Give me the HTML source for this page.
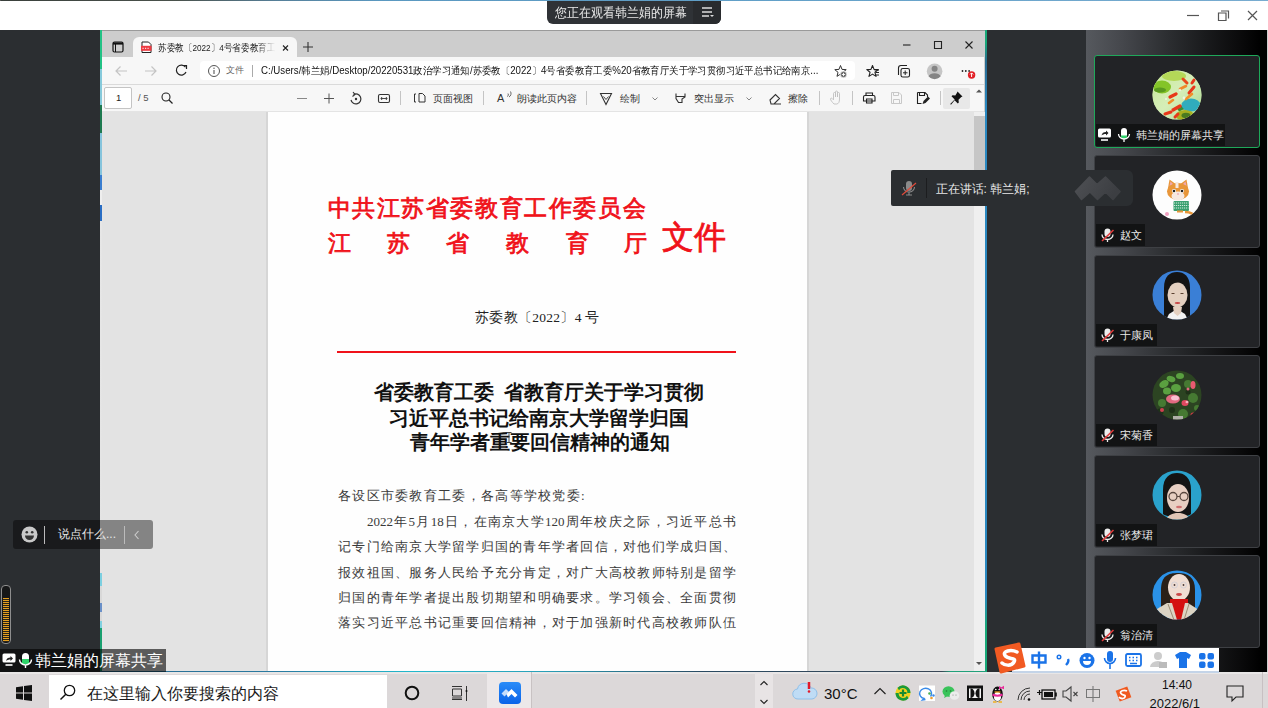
<!DOCTYPE html>
<html><head><meta charset="utf-8">
<style>
*{box-sizing:border-box;margin:0;padding:0}
html,body{width:1268px;height:708px;overflow:hidden;background:#2b2e31;font-family:"Liberation Sans",sans-serif;position:relative}
.a{position:absolute}
.t{position:absolute;white-space:nowrap;line-height:1}
svg{position:absolute;overflow:visible}
.jl{font-size:13px;line-height:16px;height:16px;color:#3a3a3a;font-family:"Liberation Serif",serif;text-align:justify;text-align-last:justify;white-space:nowrap}
.av0{background:radial-gradient(circle at 70% 68%,#2aa8b8 0 14%,transparent 15%),radial-gradient(circle at 62% 85%,#98a010 0 12%,transparent 13%),radial-gradient(circle at 25% 30%,#7ac020 0 16%,transparent 17%),radial-gradient(circle at 50% 45%,#e0602a 0 20%,transparent 40%),linear-gradient(135deg,#c8e890,#a8d880 50%,#c0e0a0)}
.av1{background:radial-gradient(ellipse at 50% 40%,#e89a50 0 18%,transparent 19%),radial-gradient(ellipse at 50% 70%,#4aa070 0 16%,transparent 17%),#fdfdfd}
.av2{background:radial-gradient(ellipse at 50% 52%,#e8d0c0 0 24%,transparent 25%),radial-gradient(ellipse at 50% 48%,#151515 0 40%,transparent 41%),radial-gradient(ellipse at 50% 100%,#f0f0f0 0 22%,transparent 23%),#3a7ad0}
.av3{background:radial-gradient(circle at 45% 55%,#e07088 0 14%,transparent 22%),radial-gradient(circle at 70% 30%,#d05070 0 8%,transparent 12%),radial-gradient(circle at 50% 50%,#4a8a3a,#2a4a20 70%)}
.av4{background:radial-gradient(ellipse at 50% 52%,#e8cfc0 0 22%,transparent 23%),radial-gradient(ellipse at 50% 45%,#1a1a1a 0 38%,transparent 39%),radial-gradient(ellipse at 50% 100%,#404040 0 30%,transparent 31%),#2aa0c8}
.av5{background:radial-gradient(ellipse at 50% 95%,#d02020 0 18%,transparent 19%),radial-gradient(ellipse at 50% 100%,#d8d0c0 0 34%,transparent 35%),radial-gradient(ellipse at 50% 45%,#e8d0c0 0 18%,transparent 19%),radial-gradient(ellipse at 50% 45%,#3a2a20 0 34%,transparent 35%),#2a90e0}
</style></head><body>

<!-- top strip + white bar -->
<div class="a" style="left:0;top:0;width:1268px;height:2px;background:linear-gradient(90deg,#3a403c 0%,#4a524c 14%,#56809a 22%,#5a98c0 30%,#62a0c8 60%,#78acd0 100%)"></div><div class="a" style="left:0;top:0;width:1px;height:30px;background:#555"></div><div class="a" style="left:1267px;top:1px;width:1px;height:29px;background:#d8d8d8"></div>
<div class="a" style="left:0;top:1px;width:1268px;height:29px;background:#fff"></div>
<!-- pill -->
<div class="a" style="left:547px;top:1px;width:174px;height:23px;background:#2f3236;border-radius:0 0 6px 6px"></div>
<div class="a" style="left:693px;top:1px;width:28px;height:23px;background:#292b2e;border-radius:0 0 6px 0"></div>
<div class="t" style="left:555px;top:5.5px;font-size:13px;color:#eaeaea;transform:scaleX(0.92);transform-origin:0 0">您正在观看韩兰娟的屏幕</div>
<svg style="left:701px;top:6px" width="14" height="12"><path d="M1 2h10M1 6h10M1 10h7" stroke="#ddd" stroke-width="1.3"/><path d="M9 9l2 2 2-2z" fill="#ddd"/></svg>
<!-- window controls -->
<svg style="left:1185px;top:8px" width="80" height="16"><path d="M2 7.5h12" stroke="#555" stroke-width="1.2"/><path d="M33.5 5h7.5v7.5h-7.5z" fill="none" stroke="#555" stroke-width="1.2"/><path d="M36 3h7.5v7.5" fill="none" stroke="#555" stroke-width="1.2"/><path d="M63 3l9 9M72 3l-9 9" stroke="#555" stroke-width="1.2"/></svg>


<!-- ============ BROWSER ============ -->
<div class="a" style="left:100px;top:30px;width:886px;height:642px;background:#cdcdcd"></div>
<div class="a" style="left:100px;top:30px;width:886px;height:1px;background:#9a9a9a"></div>
<!-- left colorful strip -->
<div class="a" style="left:100px;top:30px;width:2px;height:642px;background:linear-gradient(180deg,#22c285 0.00%,#22c285 6.07%,#86cadb 6.07%,#86cadb 11.68%,#1e7a50 11.68%,#1e7a50 16.04%,#86c4dc 16.04%,#86c4dc 22.59%,#3a7ed0 22.59%,#3a7ed0 24.92%,#eeeeee 24.92%,#eeeeee 27.26%,#2a6ec4 27.26%,#2a6ec4 29.75%,#e6e6e6 29.75%,#e3e3e3 84.58%,#7ccfe0 84.58%,#7ccfe0 86.60%,#d8d8d8 86.60%,#d8d8d8 89.25%,#6a90c8 89.25%,#6a90c8 90.65%,#d8d8d8 90.65%,#d8d8d8 92.06%,#80d0e0 92.06%,#80d0e0 93.15%,#1aa070 93.15%,#1aa070 100.00%)"></div>
<!-- right border -->
<div class="a" style="left:985px;top:30px;width:1.5px;height:642px;background:linear-gradient(180deg,#18a878 0%,#18a878 2%,#2a6a90 5%,#2a88c0 12%,#2a88c0 88%,#18a878 93%)"></div>
<!-- window buttons -->
<svg style="left:898px;top:38px" width="80" height="16"><path d="M5 7h7.5" stroke="#222" stroke-width="1.1"/><path d="M36.5 3.5h7v7h-7z" fill="none" stroke="#222" stroke-width="1.1"/><path d="M67.5 3.5l7 7M74.5 3.5l-7 7" stroke="#222" stroke-width="1.1"/></svg>
<!-- tab -->
<svg style="left:112px;top:41px" width="14" height="12"><rect x="1" y="1" width="10" height="10" rx="1.5" fill="none" stroke="#111" stroke-width="1.2"/><path d="M1 2.5h10" stroke="#111" stroke-width="2.2"/><path d="M3.5 3v8" stroke="#111" stroke-width="1"/></svg>
<div class="a" style="left:133px;top:37px;width:164px;height:21px;background:#f7f7f7;border-radius:6px 6px 0 0"></div>
<svg style="left:140px;top:41px" width="14" height="14"><path d="M2 1h6.5l2.5 2.5V11.5H2z" fill="#fff" stroke="#222" stroke-width="1"/><rect x="1" y="4.8" width="10.5" height="5" fill="#ee3b42"/><path d="M2.5 7.3h7.5" stroke="#fff" stroke-width="1" stroke-dasharray="1.2 1.3"/></svg>
<div class="t" style="left:158px;top:42.5px;font-size:9.5px;color:#222;width:120px;height:12px;overflow:hidden;-webkit-mask-image:linear-gradient(90deg,#000 82%,transparent 98%)"><span style="display:inline-block;transform:scaleX(0.86);transform-origin:0 0">苏委教〔2022〕4号省委教育工委</span></div>
<svg style="left:280px;top:43px" width="10" height="10"><path d="M3 2.5l5 5M8 2.5l-5 5" stroke="#222" stroke-width="1.1"/></svg>
<svg style="left:302px;top:41px" width="12" height="12"><path d="M6 1v10M1 6h10" stroke="#333" stroke-width="1.1"/></svg>
<!-- toolbar -->
<div class="a" style="left:102px;top:57px;width:882px;height:27px;background:#f7f7f7"></div>
<div class="a" style="left:200px;top:61px;width:655px;height:19px;background:#fff;border-radius:4px"></div>
<svg style="left:114px;top:64px" width="90" height="14"><path d="M13 7H2M6.5 2.5L2 7l4.5 4.5" fill="none" stroke="#c4c4c4" stroke-width="1.2"/><path d="M31 7h11M37.5 2.5L42 7l-4.5 4.5" fill="none" stroke="#c4c4c4" stroke-width="1.2"/><path d="M71.5 3.2A5 5 0 1 0 72 8" fill="none" stroke="#222" stroke-width="1.2"/><path d="M69 1.5h3.5v3.5" fill="none" stroke="#222" stroke-width="1.2"/></svg>
<svg style="left:207px;top:64px" width="14" height="14"><circle cx="7" cy="7" r="5.5" fill="none" stroke="#555" stroke-width="1"/><path d="M7 6v4" stroke="#555" stroke-width="1.1"/><circle cx="7" cy="4.2" r="0.7" fill="#555"/></svg>
<div class="t" style="left:226px;top:66px;font-size:9.3px;color:#666">文件</div>
<div class="a" style="left:252px;top:65px;width:1px;height:12px;background:#aaa"></div>
<div class="t" style="left:260.5px;top:65.5px;font-size:10.3px;color:#111;transform:scaleX(0.94);transform-origin:0 0">C:/Users/韩兰娟/Desktop/20220531政治学习通知/苏委教〔2022〕4号省委教育工委%20省教育厅关于学习贯彻习近平总书记给南京...</div>
<svg style="left:828px;top:58px" width="160" height="26"><path d="M12.50 7.50L14.03 11.40L18.21 11.65L14.97 14.30L16.03 18.35L12.50 16.10L8.97 18.35L10.03 14.30L6.79 11.65L10.97 11.40z" fill="none" stroke="#333" stroke-width="1" stroke-linejoin="round"/><circle cx="15.5" cy="16.5" r="3.2" fill="#666" stroke="#f7f7f7" stroke-width="0.8"/><path d="M15.5 14.8v3.4M13.8 16.5h3.4" stroke="#fff" stroke-width="0.9"/>
<path d="M44.50 7.50L46.03 11.40L50.21 11.65L46.97 14.30L48.03 18.35L44.50 16.10L40.97 18.35L42.03 14.30L38.79 11.65L42.97 11.40z" fill="none" stroke="#222" stroke-width="1.1" stroke-linejoin="round"/><path d="M46.5 12h4.5M47.5 14.5h3.5M47 17h4" stroke="#222" stroke-width="1"/>
<path d="M70.5 17V10a2.5 2.5 0 0 1 2.5-2.5h6" fill="none" stroke="#222" stroke-width="1.1"/><rect x="73" y="10.5" width="8.5" height="8.5" rx="1.8" fill="none" stroke="#222" stroke-width="1.1"/><path d="M77.2 12.5v4.5M75 14.8h4.5" stroke="#222" stroke-width="1"/>
<circle cx="106.6" cy="13.2" r="7.8" fill="#c6c6c6"/><circle cx="106.6" cy="10.8" r="3" fill="#858585"/><path d="M100.5 18.2a6.5 4.6 0 0 1 12.2 0a7.8 7.8 0 0 1-12.2 0z" fill="#858585"/>
<circle cx="134.5" cy="13" r="0.9" fill="#222"/><circle cx="137.8" cy="13" r="0.9" fill="#222"/><circle cx="141.1" cy="13" r="0.9" fill="#222"/><circle cx="143.6" cy="17" r="3.7" fill="#e21f26"/><path d="M143.6 15v4M142.1 16.4l1.5-1.5 1.5 1.5" stroke="#fff" stroke-width="1" fill="none"/></svg>
<div class="a" style="left:102px;top:84px;width:882px;height:1px;background:#dadada"></div>
<!-- pdf toolbar -->
<div class="a" style="left:102px;top:85px;width:882px;height:27px;background:#f7f7f7"></div>
<div class="a" style="left:102px;top:111px;width:882px;height:1px;background:#e4e4e4"></div>
<div class="a" style="left:104px;top:87px;width:28px;height:22px;background:#fff;border:1px solid #c4c4c4;border-radius:2px"></div>
<div class="t" style="left:116px;top:93px;font-size:9.5px;color:#222">1</div>
<div class="t" style="left:138px;top:93px;font-size:9.5px;color:#555">/ 5</div>
<svg style="left:160px;top:91px" width="14" height="14"><circle cx="6" cy="6" r="4" fill="none" stroke="#222" stroke-width="1.1"/><path d="M9 9l3.5 3.5" stroke="#222" stroke-width="1.2"/></svg>
<svg style="left:295px;top:90px" width="100" height="16"><path d="M2 8.5h10" stroke="#888" stroke-width="1"/><path d="M29 8.5h10M34 3.5v10" stroke="#555" stroke-width="1"/><path d="M58.5 4.5A5 5 0 1 1 56 10" fill="none" stroke="#333" stroke-width="1.2"/><path d="M58 2l2 2.5-2.5 2" fill="none" stroke="#333" stroke-width="1.1"/><circle cx="61" cy="9" r="1.2" fill="#333"/><rect x="83.5" y="4.5" width="11" height="8" rx="1.5" fill="none" stroke="#333" stroke-width="1.1"/><path d="M86 8.5h6M87 7L86 8.5l1 1.5M91 7l1 1.5-1 1.5" fill="none" stroke="#333" stroke-width="0.9"/></svg>
<div class="a" style="left:400px;top:91px;width:1px;height:14px;background:#c4c4c4"></div>
<svg style="left:412px;top:91px" width="16" height="14"><path d="M4 3H2.5v8H4M7 2.5h3.5l2.5 2.5v6H7z" fill="none" stroke="#333" stroke-width="1"/></svg>
<div class="t" style="left:432.5px;top:93.5px;font-size:9.6px;color:#333">页面视图</div>
<div class="a" style="left:483px;top:91px;width:1px;height:14px;background:#c4c4c4"></div>
<div class="t" style="left:497px;top:92.5px;font-size:11px;color:#333">A</div>
<svg style="left:505px;top:90px" width="8" height="8"><path d="M2 6.5a2 2 0 0 0 1-3M4 7a4 4 0 0 0 1.5-5.5" fill="none" stroke="#444" stroke-width="0.8"/></svg>
<div class="t" style="left:516.5px;top:93.5px;font-size:9.6px;color:#333">朗读此页内容</div>
<div class="a" style="left:586px;top:91px;width:1px;height:14px;background:#c4c4c4"></div>
<svg style="left:598px;top:91px" width="200" height="16"><path d="M2.5 2.5h11l-5.5 11z" fill="none" stroke="#333" stroke-width="1.1"/><path d="M5.5 5.5l2.5 3 2.5-3" fill="none" stroke="#333" stroke-width="0.9"/><path d="M54.5 6.5l2.5 2.5 2.5-2.5" fill="none" stroke="#777" stroke-width="0.9"/><path d="M78 2.5v5l2.5 4h3.5v-3.5l3-2v-3.5M78 5.5h9" fill="none" stroke="#333" stroke-width="1.1"/><path d="M148.5 6.5l2.5 2.5 2.5-2.5" fill="none" stroke="#777" stroke-width="0.9"/><path d="M172 9l5.5-5.5 4 4-5.5 5.5h-3zM175 13h8" fill="none" stroke="#333" stroke-width="1.1"/></svg>
<div class="t" style="left:619.5px;top:93.5px;font-size:9.6px;color:#333">绘制</div>
<div class="t" style="left:693.5px;top:93.5px;font-size:9.6px;color:#333">突出显示</div>
<div class="t" style="left:788px;top:93.5px;font-size:9.6px;color:#333">擦除</div>
<div class="a" style="left:819px;top:91px;width:1px;height:14px;background:#c4c4c4"></div>
<svg style="left:828px;top:89px" width="120" height="18"><path d="M6 15c-2-2-3.5-4-3.5-5s1-1.2 2-0.2l1 1V4.5a1 1 0 0 1 2 0V8V3a1 1 0 0 1 2 0v5V4.5a1 1 0 0 1 2 0v5.5c0 3-1 5-3 5z" fill="none" stroke="#c0c0c0" stroke-width="0.9"/><path d="M836 89" /><path d="M38 6.5V4h6.5v2.5M37 6.5h8.5a1.5 1.5 0 0 1 1.5 1.5v4H35.5V8A1.5 1.5 0 0 1 37 6.5zM38.5 10h5.5v4h-5.5z" fill="none" stroke="#222" stroke-width="1.1"/><path d="M63.5 3.5h7.5l2.5 2.5v8.5h-10z M65.5 3.5v3h5v-3M65.5 14.5v-4h6v4" fill="none" stroke="#c8c8c8" stroke-width="1"/><path d="M89.5 3.5h7.5l2.5 2.5v2M89.5 3.5v11h4M91.5 3.5v3h5v-3" fill="none" stroke="#222" stroke-width="1.1"/><path d="M94.5 15l1-3 4.5-4.5 2 2-4.5 4.5z" fill="#222"/></svg>
<div class="a" style="left:940px;top:91px;width:1px;height:14px;background:#c4c4c4"></div><div class="a" style="left:852px;top:91px;width:1px;height:14px;background:#c4c4c4"></div>
<div class="a" style="left:943px;top:88px;width:27px;height:21px;background:#e8e8e8;border-radius:2px"></div>
<svg style="left:948px;top:90px" width="16" height="16"><path d="M9.5 1.5l5 5-1.2.6-2.8 2.6.3 2.8-1 1-3.2-3.2L3 14.8 2.2 14l4.5-4.6-3.2-3.2 1-1 2.8.3L9 2.7z" fill="#111"/></svg>
<svg style="left:975px;top:87px" width="8" height="8"><path d="M1 5.5l3-3 3 3z" fill="#555"/></svg>
<!-- content -->
<div class="a" style="left:102px;top:112px;width:873px;height:559px;background:#e3e3e3"></div>
<div class="a" style="left:974px;top:112px;width:11px;height:559px;background:#efefef"></div>
<div class="a" style="left:974px;top:116px;width:11px;height:88px;background:#c6c6c6"></div>
<svg style="left:975px;top:660px" width="8" height="8"><path d="M1 2l3 3 3-3z" fill="#555"/></svg>
<div class="a" style="left:266px;top:112px;width:2px;height:559px;background:#d6d6d6"></div>
<div class="a" style="left:807px;top:112px;width:2px;height:559px;background:#d6d6d6"></div>
<div class="a" style="left:268px;top:112px;width:539px;height:559px;background:#fefefe"></div>
<!-- bottom border -->
<div class="a" style="left:100px;top:670.5px;width:886px;height:2px;background:linear-gradient(90deg,#2a6a90 0%,#2a7aa0 20%,#22b8cc 35%,#2aa0b8 50%,#2a4a62 68%,#3a4656 95%,#22a07a 96%,#22a07a 100%)"></div>


<!-- ============ PDF PAGE ============ -->
<div class="t" id="h1" style="left:327.5px;top:197px;font-size:23px;letter-spacing:1.6px;font-weight:400;-webkit-text-stroke:0.8px #f0121a;color:#f0121a;font-family:'Liberation Serif',serif">中共江苏省委教育工作委员会</div>
<div class="t" style="left:328px;top:233px;font-size:22.5px;font-weight:400;-webkit-text-stroke:0.8px #f0121a;color:#f0121a;font-family:'Liberation Serif',serif">江</div>
<div class="t" style="left:387px;top:233px;font-size:22.5px;font-weight:400;-webkit-text-stroke:0.8px #f0121a;color:#f0121a;font-family:'Liberation Serif',serif">苏</div>
<div class="t" style="left:446px;top:233px;font-size:22.5px;font-weight:400;-webkit-text-stroke:0.8px #f0121a;color:#f0121a;font-family:'Liberation Serif',serif">省</div>
<div class="t" style="left:506px;top:233px;font-size:22.5px;font-weight:400;-webkit-text-stroke:0.8px #f0121a;color:#f0121a;font-family:'Liberation Serif',serif">教</div>
<div class="t" style="left:566px;top:233px;font-size:22.5px;font-weight:400;-webkit-text-stroke:0.8px #f0121a;color:#f0121a;font-family:'Liberation Serif',serif">育</div>
<div class="t" style="left:624px;top:233px;font-size:22.5px;font-weight:400;-webkit-text-stroke:0.8px #f0121a;color:#f0121a;font-family:'Liberation Serif',serif">厅</div>
<div class="t" style="left:662px;top:221px;font-size:32px;font-weight:400;-webkit-text-stroke:0.8px #f0121a;color:#f0121a;font-family:'Liberation Serif',serif">文件</div>
<div class="t" style="left:475px;top:311px;font-size:13.5px;letter-spacing:0.3px;color:#222;font-family:'Liberation Serif',serif">苏委教〔2022〕4 号</div>
<div class="a" style="left:337px;top:350.5px;width:399px;height:2px;background:#f0121a"></div>
<div class="t" style="left:374px;top:383px;font-size:19.8px;font-weight:bold;color:#111;font-family:'Liberation Serif',serif">省委教育工委&nbsp; 省教育厅关于学习贯彻</div>
<div class="t" style="left:389px;top:409px;font-size:19.8px;font-weight:bold;color:#111;font-family:'Liberation Serif',serif">习近平总书记给南京大学留学归国</div>
<div class="t" style="left:410px;top:433px;font-size:19.8px;font-weight:bold;color:#111;font-family:'Liberation Serif',serif">青年学者重要回信精神的通知</div>
<svg style="left:505px;top:431px" width="8" height="13"><path d="M1.5 1.5h5M4 1.5v10M1.5 11.5h5" stroke="#333" stroke-width="0.9"/></svg>
<div class="t" style="left:338px;top:489px;font-size:13px;letter-spacing:1.3px;color:#3a3a3a;font-family:'Liberation Serif',serif">各设区市委教育工委，各高等学校党委:</div>
<div class="a jl" style="left:367px;top:514px;width:369px">2022年5月18日，在南京大学120周年校庆之际，习近平总书</div>
<div class="a jl" style="left:338px;top:539px;width:398px">记专门给南京大学留学归国的青年学者回信，对他们学成归国、</div>
<div class="a jl" style="left:338px;top:565px;width:398px">报效祖国、服务人民给予充分肯定，对广大高校教师特别是留学</div>
<div class="a jl" style="left:338px;top:590px;width:398px">归国的青年学者提出殷切期望和明确要求。学习领会、全面贯彻</div>
<div class="a jl" style="left:338px;top:615px;width:398px">落实习近平总书记重要回信精神，对于加强新时代高校教师队伍</div>


<!-- ============ PARTICIPANT PANEL ============ -->
<svg width="0" height="0" style="position:absolute"><defs><linearGradient id="kg" x1="0" y1="0" x2="1" y2="1"><stop offset="0" stop-color="#bfe68a"/><stop offset="0.5" stop-color="#dff2c8" stop-opacity="0.6"/><stop offset="1" stop-color="#98d080"/></linearGradient><clipPath id="c0"><circle cx="25" cy="25" r="24.5"/></clipPath><clipPath id="c1"><circle cx="25" cy="25" r="24.5"/></clipPath><clipPath id="c2"><circle cx="25" cy="25" r="24.5"/></clipPath><clipPath id="c3"><circle cx="25" cy="25" r="24.5"/></clipPath><clipPath id="c4"><circle cx="25" cy="25" r="24.5"/></clipPath><clipPath id="c5"><circle cx="25" cy="25" r="24.5"/></clipPath></defs></svg>
<div class="a" style="left:1086px;top:30px;width:182px;height:642px;background:linear-gradient(90deg,#56595e 0%,#45474c 20%,#2c2e31 45%,#1a1b1d 65%,#0a0a0b 85%,#000 96%)"></div>
<div class="a" style="left:1267px;top:30px;width:1px;height:642px;background:#cfcfcf"></div>
<div class="a" style="left:1094px;top:55px;width:166px;height:93px;background:#222326;border:1.5px solid #1fa85a;border-radius:3px"></div>
<svg style="left:1151.5px;top:69.7px" width="50" height="50"><g clip-path="url(#c0)"><rect width="50" height="50" fill="#c8e8a0"/><rect width="50" height="50" fill="url(#kg)"/><ellipse cx="22" cy="6" rx="12" ry="5" fill="#b4d858"/><ellipse cx="10" cy="17" rx="9" ry="6.5" fill="#84c428"/><ellipse cx="8" cy="20" rx="6" ry="2.5" fill="#5a9a20"/><path d="M26 40c4-3 10-4 16-1" stroke="#3a8a30" stroke-width="4" fill="none"/><ellipse cx="39" cy="35" rx="9.5" ry="6.5" fill="#30acbc"/><ellipse cx="33" cy="45.5" rx="9" ry="5.5" fill="#a8b020"/><ellipse cx="34" cy="45.5" rx="4.5" ry="2.8" fill="#4a7a20"/><g fill="none" stroke-linecap="round"><path d="M31 9l4 4" stroke="#e8481a" stroke-width="3"/><path d="M42 10l-2 3" stroke="#e8381a" stroke-width="3"/><path d="M42 17l-5 6" stroke="#e8381a" stroke-width="3"/><path d="M34 16l-6 3" stroke="#f08a2a" stroke-width="2.6"/><path d="M24 24l-6 3" stroke="#e8381a" stroke-width="3.2"/><path d="M40 24l-6 5" stroke="#f0902a" stroke-width="2.6"/><path d="M21 30l-4 3" stroke="#f0902a" stroke-width="2.6"/><path d="M28 36l-7 4" stroke="#e8381a" stroke-width="3.2"/><path d="M19 42l-6 2" stroke="#e8381a" stroke-width="3"/><path d="M26 44l-3 3" stroke="#e8381a" stroke-width="3"/></g><g fill="#f4f8f0" fill-opacity="0.8"><circle cx="28" cy="20" r="1.2"/><circle cx="32" cy="28" r="1.4"/><circle cx="14" cy="29" r="1"/></g></g></svg>
<div class="a" style="left:1096px;top:124px;width:129px;height:22px;background:#121314"></div>
<svg style="left:1097px;top:127px" width="40" height="16"><rect x="1" y="1.5" width="13" height="9" rx="1.5" fill="#fff"/><path d="M4.5 8.5c0.5-2.5 2-3.5 4.5-3.5V3.5l2.5 2.5-2.5 2.5V7c-2 0-3.2 0.5-4.5 1.5z" fill="#222"/><path d="M4 13h7" stroke="#fff" stroke-width="1.6"/>
<rect x="24" y="1" width="6" height="10" rx="3" fill="#fff"/><path d="M24 8.5h6v0.5a3 3 0 0 1-6 0z" fill="#2fd36a"/><path d="M21.5 7a5.5 5 0 0 0 11 0M27 12v3" fill="none" stroke="#fff" stroke-width="1.3"/></svg>
<div class="t" style="left:1136px;top:130px;font-size:10.6px;color:#eaeaea">韩兰娟的屏幕共享</div>
<div class="a" style="left:1094px;top:155px;width:166px;height:93px;background:#222326;border:1.5px solid #3e4044;border-radius:3px"></div>
<svg style="left:1151.5px;top:169.7px" width="50" height="50"><g clip-path="url(#c1)"><rect width="50" height="50" fill="#fdfdfd"/><path d="M15.5 21L17.5 9.5 25 15z" fill="#e8963a"/><path d="M36.5 21L34.5 9.5 27 15z" fill="#e8963a"/><path d="M17.5 16l1-4.5 3 3z" fill="#f0a8b0"/><path d="M34.5 16l-1-4.5-3 3z" fill="#f0a8b0"/><ellipse cx="26" cy="21.5" rx="11" ry="8.5" fill="#e8963a"/><ellipse cx="26" cy="26" rx="6.5" ry="4.5" fill="#f6e8e0"/><path d="M25 12v6" stroke="#f6e8e0" stroke-width="3"/><circle cx="22" cy="21" r="2.1" fill="#fff"/><circle cx="30" cy="21" r="2.1" fill="#fff"/><circle cx="22" cy="21" r="1.3" fill="#222"/><circle cx="30" cy="21" r="1.3" fill="#222"/><circle cx="26" cy="24" r="0.8" fill="#e88a9a"/><rect x="21.5" y="31" width="15.5" height="10" rx="1" fill="#3aa070"/><path d="M22 33h14.5M22 35.5h14.5M22 38h14.5" stroke="#e0f4e8" stroke-width="0.9" stroke-dasharray="1.2 0.8"/><path d="M33 42c5 0 9 1 9 6" stroke="#e8963a" stroke-width="2.5" fill="none"/><path d="M25 41.5h6" stroke="#e8963a" stroke-width="2"/><circle cx="15" cy="44" r="2" fill="#f0a0c0"/></g></svg>
<div class="a" style="left:1096px;top:224px;width:49px;height:22px;background:#121314"></div>
<svg style="left:1099px;top:227px" width="16" height="16"><rect x="5.5" y="1.5" width="6" height="8.5" rx="3" fill="#eee"/><path d="M3 7.5a5.5 5 0 0 0 11 0M8.5 12.5v2.5" fill="none" stroke="#eee" stroke-width="1.3"/><path d="M3 14L14.5 3" stroke="#e23b3b" stroke-width="1.6"/></svg>
<div class="t" style="left:1120px;top:230px;font-size:10.6px;color:#eaeaea">赵文</div>
<div class="a" style="left:1094px;top:255px;width:166px;height:93px;background:#222326;border:1.5px solid #3e4044;border-radius:3px"></div>
<svg style="left:1151.5px;top:269.7px" width="50" height="50"><g clip-path="url(#c2)"><rect width="50" height="50" fill="#3a7fd6"/><path d="M12 50V18C12 6 18 2 25 2s13 4 13 16v32z" fill="#141414"/><ellipse cx="25.5" cy="25" rx="10" ry="12.5" fill="#e4d0c0"/><path d="M15 14c3-6 8-8 11-8s7 2 9 7c-4-2-9-2-20 2z" fill="#141414"/><path d="M17 44l8-5 8 5 3 6H14z" fill="#f2f2f2"/><path d="M21 37h9l-1 6-3.5 3-3.5-3z" fill="#e4d0c0"/><path d="M19.5 23.5h3M28.5 23.5h3" stroke="#5a4030" stroke-width="1"/><ellipse cx="25.5" cy="33" rx="2.8" ry="0.9" fill="#c84848"/></g></svg>
<div class="a" style="left:1096px;top:324px;width:61px;height:22px;background:#121314"></div>
<svg style="left:1099px;top:327px" width="16" height="16"><rect x="5.5" y="1.5" width="6" height="8.5" rx="3" fill="#eee"/><path d="M3 7.5a5.5 5 0 0 0 11 0M8.5 12.5v2.5" fill="none" stroke="#eee" stroke-width="1.3"/><path d="M3 14L14.5 3" stroke="#e23b3b" stroke-width="1.6"/></svg>
<div class="t" style="left:1120px;top:330px;font-size:10.6px;color:#eaeaea">于康凤</div>
<div class="a" style="left:1094px;top:355px;width:166px;height:93px;background:#222326;border:1.5px solid #3e4044;border-radius:3px"></div>
<svg style="left:1151.5px;top:369.7px" width="50" height="50"><g clip-path="url(#c3)"><rect width="50" height="50" fill="#2c4422"/><g fill="#5aa040"><ellipse cx="12" cy="14" rx="5" ry="3.5" transform="rotate(-30 12 14)"/><ellipse cx="19" cy="9" rx="4.5" ry="3" transform="rotate(20 19 9)"/><ellipse cx="28" cy="6" rx="4" ry="3"/><ellipse cx="15" cy="21" rx="4" ry="3.5"/><ellipse cx="24" cy="18" rx="5" ry="4"/></g><g fill="#467a32"><circle cx="36" cy="14" r="4"/><circle cx="41" cy="28" r="5"/><circle cx="31" cy="44" r="5"/><circle cx="10" cy="33" r="4"/><circle cx="45" cy="38" r="3"/></g><g fill="#1e3018"><circle cx="8" cy="42" r="3.5"/><circle cx="20" cy="40" r="3"/><circle cx="36" cy="22" r="2.5"/></g><ellipse cx="21" cy="29" rx="7" ry="4.5" fill="#e06a80"/><ellipse cx="23" cy="28" rx="4" ry="2.5" fill="#f8c0d0"/><ellipse cx="33" cy="33" rx="3.5" ry="3" fill="#e04860"/><ellipse cx="35" cy="32" rx="1.5" ry="1.2" fill="#f8b0c0"/><ellipse cx="41" cy="15" rx="2.5" ry="4" fill="#e85a70"/><circle cx="36" cy="19" r="1.5" fill="#e06a80"/><circle cx="10" cy="40" r="2" fill="#d04050"/><circle cx="41" cy="45" r="2.5" fill="#d03848"/><rect x="21" y="46" width="10" height="4" fill="#b0b0a8"/></g></svg>
<div class="a" style="left:1096px;top:424px;width:61px;height:22px;background:#121314"></div>
<svg style="left:1099px;top:427px" width="16" height="16"><rect x="5.5" y="1.5" width="6" height="8.5" rx="3" fill="#eee"/><path d="M3 7.5a5.5 5 0 0 0 11 0M8.5 12.5v2.5" fill="none" stroke="#eee" stroke-width="1.3"/><path d="M3 14L14.5 3" stroke="#e23b3b" stroke-width="1.6"/></svg>
<div class="t" style="left:1120px;top:430px;font-size:10.6px;color:#eaeaea">宋菊香</div>
<div class="a" style="left:1094px;top:455px;width:166px;height:93px;background:#222326;border:1.5px solid #3e4044;border-radius:3px"></div>
<svg style="left:1151.5px;top:469.7px" width="50" height="50"><g clip-path="url(#c4)"><rect width="50" height="50" fill="#2aa2cc"/><path d="M11 44V20C11 7 18 3 25 3s14 4 14 17v24c-4 4-24 4-28 0z" fill="#141414"/><ellipse cx="26" cy="28" rx="11" ry="14" fill="#e8cfc2"/><path d="M14 16c3-8 10-10 14-10s9 3 10 10c-6-3-15-4-24 0z" fill="#141414"/><circle cx="21" cy="26.5" r="4" fill="none" stroke="#5a4840" stroke-width="1.3"/><circle cx="32" cy="26.5" r="4" fill="none" stroke="#5a4840" stroke-width="1.3"/><path d="M25 26.5h3" stroke="#5a4840" stroke-width="1"/><ellipse cx="27" cy="37" rx="3" ry="1.2" fill="#d07070"/><path d="M14 50c2-5 6-7 12-7s10 2 12 7z" fill="#e0c6b6"/></g></svg>
<div class="a" style="left:1096px;top:524px;width:61px;height:22px;background:#121314"></div>
<svg style="left:1099px;top:527px" width="16" height="16"><rect x="5.5" y="1.5" width="6" height="8.5" rx="3" fill="#eee"/><path d="M3 7.5a5.5 5 0 0 0 11 0M8.5 12.5v2.5" fill="none" stroke="#eee" stroke-width="1.3"/><path d="M3 14L14.5 3" stroke="#e23b3b" stroke-width="1.6"/></svg>
<div class="t" style="left:1120px;top:530px;font-size:10.6px;color:#eaeaea">张梦珺</div>
<div class="a" style="left:1094px;top:555px;width:166px;height:93px;background:#222326;border:1.5px solid #3e4044;border-radius:3px"></div>
<svg style="left:1151.5px;top:569.7px" width="50" height="50"><g clip-path="url(#c5)"><rect width="50" height="50" fill="#2a92e8"/><path d="M9 44V20C9 6 16 3 26 3s17 4 17 17v24z" fill="#2a2018"/><ellipse cx="27" cy="17.5" rx="11" ry="13.5" fill="#f0ddd2"/><circle cx="22.5" cy="15" r="3" fill="none" stroke="#c8ccd8" stroke-width="0.7"/><circle cx="31.5" cy="15" r="3" fill="none" stroke="#c8ccd8" stroke-width="0.7"/><circle cx="22.5" cy="15" r="0.9" fill="#4a3a3a"/><circle cx="31.5" cy="15" r="0.9" fill="#4a3a3a"/><ellipse cx="27" cy="24.5" rx="3" ry="1.4" fill="#c84848"/><path d="M18 29h18v21H18z" fill="#d41010"/><path d="M0 42l15-9h5l5 17H0z" fill="#dcd4c4"/><path d="M50 42l-14-9h-3l-4 17h21z" fill="#dcd4c4"/><path d="M16 34l6 16M37 34l-5 16" stroke="#8a7a60" stroke-width="0.8"/></g></svg>
<div class="a" style="left:1096px;top:624px;width:61px;height:22px;background:#121314"></div>
<svg style="left:1099px;top:627px" width="16" height="16"><rect x="5.5" y="1.5" width="6" height="8.5" rx="3" fill="#eee"/><path d="M3 7.5a5.5 5 0 0 0 11 0M8.5 12.5v2.5" fill="none" stroke="#eee" stroke-width="1.3"/><path d="M3 14L14.5 3" stroke="#e23b3b" stroke-width="1.6"/></svg>
<div class="t" style="left:1120px;top:630px;font-size:10.6px;color:#eaeaea">翁治清</div>

<!-- ============ OVERLAYS ============ -->
<div class="a" style="left:13px;top:520px;width:140px;height:29px;background:rgba(0,0,0,0.42);border-radius:3px"></div>
<svg style="left:21px;top:526px" width="130" height="18"><circle cx="8.5" cy="8.5" r="8" fill="#c9c9c9"/><circle cx="5.8" cy="6.3" r="1.3" fill="#333"/><circle cx="11.2" cy="6.3" r="1.3" fill="#333"/><path d="M4 9.5h9a4.5 4.5 0 0 1-9 0z" fill="#333"/><path d="M23.5 0v18" stroke="#bbb" stroke-width="1"/><path d="M103.5 0v18" stroke="#bbb" stroke-width="1"/><path d="M117.5 5l-3.5 4 3.5 4" fill="none" stroke="#ccc" stroke-width="1.1"/></svg>
<div class="t" style="left:58px;top:528px;font-size:12px;color:#e6e6e6">说点什么...</div>
<!-- volume bar -->
<div class="a" style="left:1px;top:585px;width:10px;height:59px;border:1.2px solid #8e8e8e;border-radius:4px;background:#161718"></div>
<svg style="left:3px;top:598px" width="6" height="44"><g fill="#e6a020"><rect x="0" y="0" width="6" height="1.1"/><rect x="0" y="2" width="6" height="1.1"/><rect x="0" y="4" width="6" height="1.1"/><rect x="0" y="6" width="6" height="1.1"/><rect x="0" y="8" width="6" height="1.1"/><rect x="0" y="10" width="6" height="1.1"/><rect x="0" y="12" width="6" height="1.1"/><rect x="0" y="14" width="6" height="1.1"/><rect x="0" y="16" width="6" height="1.1"/><rect x="0" y="18" width="6" height="1.1"/><rect x="0" y="20" width="6" height="1.1"/><rect x="0" y="22" width="6" height="1.1"/><rect x="0" y="24" width="6" height="1.1"/><rect x="0" y="26" width="6" height="1.1"/><rect x="0" y="28" width="6" height="1.1"/><rect x="0" y="30" width="6" height="1.1"/><rect x="0" y="32" width="6" height="1.1"/><rect x="0" y="34" width="6" height="1.1"/><rect x="0" y="36" width="6" height="1.1"/><rect x="0" y="38" width="6" height="1.1"/><rect x="0" y="40" width="6" height="1.1"/><rect x="0" y="42" width="6" height="1.1"/></g></svg>
<!-- bottom label -->
<div class="a" style="left:0;top:648.5px;width:166px;height:23.5px;background:rgba(0,0,0,0.6)"></div>
<svg style="left:2px;top:652px" width="32" height="18"><rect x="0.5" y="1.5" width="13" height="9" rx="1.5" fill="#fff"/><path d="M4 9c0.5-2.5 2-3.5 4.5-3.5V4l2.5 2.5L8.5 9V7.5c-2 0-3.2 0.5-4.5 1.5z" fill="#222"/><path d="M3.5 13h7" stroke="#fff" stroke-width="1.6"/><rect x="20" y="1" width="7" height="11" rx="3.5" fill="#fff"/><rect x="20" y="7" width="7" height="5" fill="#2fd36a"/><path d="M17.5 7.5a6 5.5 0 0 0 12 0M23.5 13v3" fill="none" stroke="#fff" stroke-width="1.4"/></svg>
<div class="t" style="left:35px;top:653px;font-size:16px;color:#fff">韩兰娟的屏幕共享</div>
<!-- speaking -->
<div class="a" style="left:891px;top:170px;width:242px;height:36px;background:#2b2e31;border-radius:2px 6px 6px 2px"></div>
<svg style="left:900px;top:180px" width="130" height="18"><rect x="6" y="1" width="6" height="10" rx="3" fill="#8a8a8a"/><path d="M3.5 7a5.5 5 0 0 0 11 0M9 12v3M6 15h6" fill="none" stroke="#8a8a8a" stroke-width="1.1"/><path d="M2 15L16 3" stroke="#e04a3a" stroke-width="1.2"/><path d="M26.5 -2v20" stroke="#1c1d1f" stroke-width="1"/></svg>
<div class="t" style="left:935.5px;top:182.5px;font-size:12px;color:#e8e8e8">正在讲话: 韩兰娟;</div>
<svg style="left:1070px;top:170px" width="60" height="36"><defs><linearGradient id="lg" x1="0" y1="0" x2="1" y2="0.3"><stop offset="0" stop-color="#4e5054"/><stop offset="1" stop-color="#3c3e42"/></linearGradient></defs><path d="M5.5 21.5L19.5 7l7.5 7.5L35.5 7 50 21.5 43 29.5 35.5 22 27.5 29.5 20 22 11.5 29.5z" fill="url(#lg)" stroke="url(#lg)" stroke-width="1.5" stroke-linejoin="round"/></svg>


<!-- ============ TASKBAR ============ -->
<div class="a" style="left:0;top:672px;width:1268px;height:36px;background:#dcd8d9;border-top:2px solid #e8e6e6"></div>
<svg style="left:16px;top:685px" width="17" height="16"><path d="M0 2.2L7 1.2V7.5H0zM8 1L16 0V7.5H8zM0 8.5h7v6.3L0 13.8zM8 8.5h8V16L8 14.9z" fill="#111"/></svg>
<div class="a" style="left:49px;top:675px;width:338px;height:33px;background:#fff"></div>
<svg style="left:59px;top:684px" width="18" height="18"><circle cx="10.5" cy="6.5" r="5.2" fill="none" stroke="#111" stroke-width="1.3"/><path d="M6.8 10.2L1.5 15.5" stroke="#111" stroke-width="1.5"/></svg>
<div class="t" style="left:87px;top:686px;font-size:16px;color:#1a1a1a">在这里输入你要搜索的内容</div>
<svg style="left:402px;top:683px" width="80" height="20"><circle cx="10" cy="10" r="6.3" fill="none" stroke="#111" stroke-width="2"/><path d="M50 3.5h10M50 16.5h10M50 15h10M50.5 6h9v7h-9zM64.5 3v15" fill="none" stroke="#333" stroke-width="1"/><circle cx="64.5" cy="8" r="1" fill="#111"/></svg>
<div class="a" style="left:487px;top:672px;width:45px;height:36px;background:#ece8e9"></div>
<div class="a" style="left:499px;top:682px;width:22px;height:22px;background:linear-gradient(180deg,#2a8cf8,#0a62e8);border-radius:4px"></div>
<svg style="left:500px;top:686px" width="22" height="14"><path d="M1.5 7.5L6 3l3 3-4.5 4.5z" fill="#fff" fill-opacity="0.75"/><path d="M6.5 8L11.5 3l6 6-2.5 2.5-3.5-3.5-3.5 3.5z" fill="#fff"/></svg>
<div class="a" style="left:531px;top:672px;width:1px;height:36px;background:#c8c2c3"></div>
<div class="a" style="left:755px;top:672px;width:18px;height:36px;background:#e8e4e5"></div>
<svg style="left:758px;top:677px" width="12" height="30"><path d="M2.5 8l3.5-3.5 3.5 3.5" fill="none" stroke="#222" stroke-width="1.1"/><path d="M2.5 23l3.5 3.5 3.5-3.5" fill="none" stroke="#222" stroke-width="1.1"/></svg>
<svg style="left:793px;top:680px" width="26" height="22"><path d="M5 19a5 5 0 0 1-0.5-10A7 7 0 0 1 18 8a5.5 5.5 0 0 1 1 11z" fill="#bfdcf5" stroke="#8fc0ea" stroke-width="1"/><path d="M16 2v7" stroke="#e21a2a" stroke-width="2.5"/><circle cx="16" cy="11.5" r="1.3" fill="#e21a2a"/></svg>
<div class="t" style="left:824px;top:686px;font-size:15px;color:#111">30°C</div>
<svg style="left:873px;top:686px" width="14" height="10"><path d="M1.5 8l5.5-5.5L12.5 8" fill="none" stroke="#222" stroke-width="1.2"/></svg>
<svg style="left:890px;top:684px" width="170" height="20">
<circle cx="13" cy="9" r="7.5" fill="#f2d21e"/><path d="M7.5 3.8A7.5 7.5 0 0 1 20.5 9h-3.2A4.5 4.5 0 0 0 9 6.2z" fill="#1a9a3a"/><path d="M18.5 14.2A7.5 7.5 0 0 1 5.5 9h3.2A4.5 4.5 0 0 0 17 11.8z" fill="#1a9a3a"/><path d="M13 5.5v7M9.5 9h7" stroke="#1a8a30" stroke-width="2.2"/>
<rect x="29" y="1.5" width="16" height="15.5" fill="#fff"/><path d="M40.5 12.5A6 5.2 0 1 0 34 14.5l-1.5 1.5 3-0.5" fill="none" stroke="#3a8ae8" stroke-width="1.4"/><circle cx="39.5" cy="9.5" r="1.3" fill="#4ab050"/><circle cx="41.5" cy="14" r="1.3" fill="#f0a030"/><circle cx="43.5" cy="11.5" r="1.2" fill="#3a8ae8"/>
<ellipse cx="58.5" cy="7.5" rx="6" ry="5.2" fill="#3ac35a"/><path d="M55 11.5l-1 2.5 3-1.5z" fill="#3ac35a"/><circle cx="56.5" cy="7" r="0.8" fill="#2a7a3a"/><circle cx="60.5" cy="7" r="0.8" fill="#2a7a3a"/><ellipse cx="64.5" cy="11.5" rx="4.8" ry="4.3" fill="#ececec"/><circle cx="63" cy="11" r="0.6" fill="#888"/><circle cx="66" cy="11" r="0.6" fill="#888"/>
<rect x="77" y="1.5" width="16" height="15.5" fill="#111"/><rect x="79" y="4.5" width="12" height="9.5" fill="#f4f4f4"/><path d="M80.5 4.5h0.5a3.5 4.75 0 0 1 0 9.5h-0.5z" fill="#111"/><path d="M89.5 4.5h-0.5a3.5 4.75 0 0 0 0 9.5h0.5z" fill="#111"/>
<ellipse cx="107.5" cy="10" rx="5.3" ry="7.5" fill="#111"/><ellipse cx="107.5" cy="12.5" rx="3.6" ry="4.5" fill="#fff"/><circle cx="105.8" cy="5.5" r="0.8" fill="#fff"/><circle cx="109.2" cy="5.5" r="0.8" fill="#fff"/><path d="M104.5 8h6" stroke="#f0a020" stroke-width="1.3"/><path d="M102.5 10.5c3 1.5 7 1.5 10 0" stroke="#e82a9a" stroke-width="2.2" fill="none"/><path d="M109 2l2.5 1.2 2.5-1.5v3.5l-2.5-1-2.5 1.3z" fill="#e82a9a"/><path d="M103 18h3.5M108.5 18h3.5" stroke="#f0b020" stroke-width="1.5"/>
<path d="M128 16a12 12 0 0 1 12-12M131 16a9 9 0 0 1 9-9M134 16a6 6 0 0 1 6-6" fill="none" stroke="#333" stroke-width="1"/><circle cx="139" cy="15.5" r="1.3" fill="#111"/>
<rect x="152" y="6" width="13" height="9" fill="none" stroke="#111" stroke-width="1.3"/><rect x="154" y="8" width="9" height="5" fill="#111"/><path d="M147 8.5h5M149.5 6v5" stroke="#111" stroke-width="1.2"/><rect x="165" y="8.5" width="1.8" height="4" fill="#111"/></svg>
<svg style="left:1061px;top:685px" width="80" height="18"><path d="M2 6h3l5-4v14l-5-4H2z" fill="none" stroke="#444" stroke-width="1.1"/><path d="M12.5 7l4 4M16.5 7l-4 4" stroke="#444" stroke-width="1.1"/>
<rect x="25.5" y="4.5" width="13" height="8" fill="none" stroke="#777" stroke-width="1"/><path d="M32 1v16" stroke="#777" stroke-width="1.1"/>
<path d="M55 5l12-3 3 11-12 3z" fill="#f05a20" transform="rotate(-6 62 9)"/><path d="M66 6c-3-1.5-8 0-6 2.5s5 1 4 3.5-5 1.5-6 0" fill="none" stroke="#fff" stroke-width="1.8"/></svg>
<div class="t" style="left:1162px;top:679px;font-size:12px;color:#111">14:40</div>
<div class="t" style="left:1149.5px;top:696.5px;font-size:13px;color:#111">2022/6/1</div>
<svg style="left:1226px;top:685px" width="20" height="18"><path d="M1 1h16v11H10l-4 4v-4H1z" fill="none" stroke="#222" stroke-width="1.1"/></svg>
<div class="a" style="left:1262px;top:672px;width:1px;height:36px;background:#c8c0c2"></div>
<!-- sogou ime bar -->
<div class="a" style="left:1012px;top:648px;width:207px;height:24px;background:#fff"></div><div class="a" style="left:1012px;top:671px;width:207px;height:1.5px;background:#c4d4e8"></div>
<svg style="left:993px;top:643px" width="34" height="32"><path d="M3 6L26 1l5 22-23 6z" fill="#f15a22" stroke="#f15a22" stroke-width="3" stroke-linejoin="round"/><path d="M24 9c-6-3-15-1-12 3.5s12 1.5 9 6.5-10 3-12 1" fill="none" stroke="#fff" stroke-width="3.5" stroke-linecap="round"/></svg>
<svg style="left:1028px;top:650px" width="192" height="22" style="">
<path d="M11 1.5v17M4.5 5.5h13v7h-13z" fill="none" stroke="#1a73e8" stroke-width="2.4"/>
<circle cx="31" cy="7" r="1.8" fill="none" stroke="#1a73e8" stroke-width="1.4"/><path d="M40 9c1 2 0 4-2 6" fill="none" stroke="#1a73e8" stroke-width="2.4"/>
<circle cx="59" cy="10.5" r="7.5" fill="#1a73e8"/><circle cx="56.5" cy="8" r="1.2" fill="#fff"/><circle cx="61.5" cy="8" r="1.2" fill="#fff"/><path d="M55 11h8a4 4 0 0 1-8 0z" fill="#fff"/>
<rect x="79" y="1" width="6" height="11" rx="3" fill="#1a73e8"/><path d="M76.5 8a5.5 5.5 0 0 0 11 0M82 14v5" fill="none" stroke="#1a73e8" stroke-width="1.6"/>
<rect x="98" y="4" width="15" height="12" rx="1.5" fill="none" stroke="#1a73e8" stroke-width="1.8"/><path d="M101 7.5h1.5M104.5 7.5h1.5M108 7.5h1.5M101 10.5h1.5M104.5 10.5h1.5M108 10.5h1.5M102 13.5h7" stroke="#1a73e8" stroke-width="1.3"/>
<circle cx="130" cy="6" r="4" fill="#ccc"/><path d="M122 17a8 6 0 0 1 16 0z" fill="#ccc"/><rect x="131" y="12" width="8" height="6" fill="#bbb"/>
<path d="M147 5l5-3h6l5 3-2 4-2-1v10h-8V8l-2 1z" fill="#1a73e8"/>
<rect x="171" y="3" width="6.5" height="6.5" rx="2" fill="#1a73e8"/><rect x="179.5" y="3" width="6.5" height="6.5" rx="2" fill="#1a73e8"/><rect x="171" y="11.5" width="6.5" height="6.5" rx="2" fill="#1a73e8"/><rect x="179.5" y="11.5" width="6.5" height="6.5" rx="2" fill="#1a73e8"/></svg>

</body></html>
